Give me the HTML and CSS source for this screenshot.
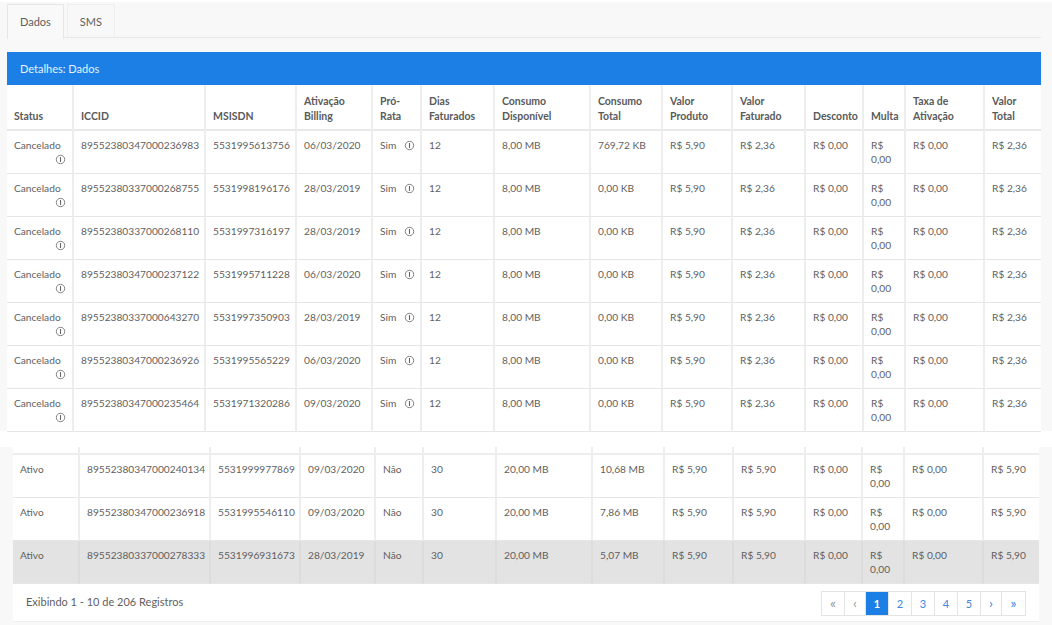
FILE: index.html
```html
<!DOCTYPE html>
<html lang="pt-BR">
<head>
    <meta charset="UTF-8">
    <title>Detalhes: Dados</title>
    <link rel="stylesheet" href="styles.css">
</head>
<body>
    <svg class="icon-defs" width="0" height="0">
        <symbol id="info" viewBox="0 0 11 11">
            <circle cx="5.5" cy="5.5" r="4.2" fill="none" stroke="currentColor" stroke-width="0.8"/>
            <path d="M5.5 3v5" fill="none" stroke="currentColor" stroke-width="1.1"/>
        </symbol>
    </svg>

    <!-- Primeira parte -->
    <div class="top-part">
        <div class="tabs">
            <div class="tab active">Dados</div>
            <div class="tab">SMS</div>
        </div>
        <div class="panel-title">Detalhes: Dados</div>
        <table class="top-table">
            <colgroup><col><col><col><col><col><col><col><col><col><col><col><col><col><col></colgroup>
            <thead>
                <tr><th>Status</th><th>ICCID</th><th>MSISDN</th><th>Ativação Billing</th><th>Pró-Rata</th><th>Dias Faturados</th><th>Consumo Disponível</th><th>Consumo Total</th><th>Valor Produto</th><th>Valor Faturado</th><th>Desconto</th><th>Multa</th><th>Taxa de Ativação</th><th>Valor Total</th></tr>
            </thead>
            <tbody>
                <tr><td>Cancelado<div class="status-info"><svg class="info-icon"><use href="#info"/></svg></div></td><td>89552380347000236983</td><td>5531995613756</td><td>06/03/2020</td><td class="rate-cell">Sim<svg class="info-icon rate-info"><use href="#info"/></svg></td><td>12</td><td>8,00 MB</td><td>769,72 KB</td><td>R$ 5,90</td><td>R$ 2,36</td><td>R$ 0,00</td><td>R$ 0,00</td><td>R$ 0,00</td><td>R$ 2,36</td></tr>
                <tr><td>Cancelado<div class="status-info"><svg class="info-icon"><use href="#info"/></svg></div></td><td>89552380337000268755</td><td>5531998196176</td><td>28/03/2019</td><td class="rate-cell">Sim<svg class="info-icon rate-info"><use href="#info"/></svg></td><td>12</td><td>8,00 MB</td><td>0,00 KB</td><td>R$ 5,90</td><td>R$ 2,36</td><td>R$ 0,00</td><td>R$ 0,00</td><td>R$ 0,00</td><td>R$ 2,36</td></tr>
                <tr><td>Cancelado<div class="status-info"><svg class="info-icon"><use href="#info"/></svg></div></td><td>89552380337000268110</td><td>5531997316197</td><td>28/03/2019</td><td class="rate-cell">Sim<svg class="info-icon rate-info"><use href="#info"/></svg></td><td>12</td><td>8,00 MB</td><td>0,00 KB</td><td>R$ 5,90</td><td>R$ 2,36</td><td>R$ 0,00</td><td>R$ 0,00</td><td>R$ 0,00</td><td>R$ 2,36</td></tr>
                <tr><td>Cancelado<div class="status-info"><svg class="info-icon"><use href="#info"/></svg></div></td><td>89552380347000237122</td><td>5531995711228</td><td>06/03/2020</td><td class="rate-cell">Sim<svg class="info-icon rate-info"><use href="#info"/></svg></td><td>12</td><td>8,00 MB</td><td>0,00 KB</td><td>R$ 5,90</td><td>R$ 2,36</td><td>R$ 0,00</td><td>R$ 0,00</td><td>R$ 0,00</td><td>R$ 2,36</td></tr>
                <tr><td>Cancelado<div class="status-info"><svg class="info-icon"><use href="#info"/></svg></div></td><td>89552380337000643270</td><td>5531997350903</td><td>28/03/2019</td><td class="rate-cell">Sim<svg class="info-icon rate-info"><use href="#info"/></svg></td><td>12</td><td>8,00 MB</td><td>0,00 KB</td><td>R$ 5,90</td><td>R$ 2,36</td><td>R$ 0,00</td><td>R$ 0,00</td><td>R$ 0,00</td><td>R$ 2,36</td></tr>
                <tr><td>Cancelado<div class="status-info"><svg class="info-icon"><use href="#info"/></svg></div></td><td>89552380347000236926</td><td>5531995565229</td><td>06/03/2020</td><td class="rate-cell">Sim<svg class="info-icon rate-info"><use href="#info"/></svg></td><td>12</td><td>8,00 MB</td><td>0,00 KB</td><td>R$ 5,90</td><td>R$ 2,36</td><td>R$ 0,00</td><td>R$ 0,00</td><td>R$ 0,00</td><td>R$ 2,36</td></tr>
                <tr><td>Cancelado<div class="status-info"><svg class="info-icon"><use href="#info"/></svg></div></td><td>89552380347000235464</td><td>5531971320286</td><td>09/03/2020</td><td class="rate-cell">Sim<svg class="info-icon rate-info"><use href="#info"/></svg></td><td>12</td><td>8,00 MB</td><td>0,00 KB</td><td>R$ 5,90</td><td>R$ 2,36</td><td>R$ 0,00</td><td>R$ 0,00</td><td>R$ 0,00</td><td>R$ 2,36</td></tr>
            </tbody>
        </table>
    </div>

    <!-- Segunda parte -->
    <div class="bottom-part">
        <table class="bottom-table">
            <colgroup><col><col><col><col><col><col><col><col><col><col><col><col><col><col></colgroup>
            <tbody>
                <tr class="cut-row"><td></td><td></td><td></td><td></td><td></td><td></td><td></td><td></td><td></td><td></td><td></td><td></td><td></td><td></td></tr>
                <tr><td>Ativo</td><td>89552380347000240134</td><td>5531999977869</td><td>09/03/2020</td><td>Não</td><td>30</td><td>20,00 MB</td><td>10,68 MB</td><td>R$ 5,90</td><td>R$ 5,90</td><td>R$ 0,00</td><td>R$ 0,00</td><td>R$ 0,00</td><td>R$ 5,90</td></tr>
                <tr><td>Ativo</td><td>89552380347000236918</td><td>5531995546110</td><td>09/03/2020</td><td>Não</td><td>30</td><td>20,00 MB</td><td>7,86 MB</td><td>R$ 5,90</td><td>R$ 5,90</td><td>R$ 0,00</td><td>R$ 0,00</td><td>R$ 0,00</td><td>R$ 5,90</td></tr>
                <tr class="selected"><td>Ativo</td><td>89552380337000278333</td><td>5531996931673</td><td>28/03/2019</td><td>Não</td><td>30</td><td>20,00 MB</td><td>5,07 MB</td><td>R$ 5,90</td><td>R$ 5,90</td><td>R$ 0,00</td><td>R$ 0,00</td><td>R$ 0,00</td><td>R$ 5,90</td></tr>
            </tbody>
        </table>
        <div class="table-footer">
            <span>Exibindo 1 - 10 de 206 Registros</span>
            <div class="pagination">
                <span class="page-link arrow muted">«</span>
                <span class="page-link arrow narrow muted">‹</span>
                <span class="page-link current">1</span>
                <span class="page-link">2</span>
                <span class="page-link">3</span>
                <span class="page-link">4</span>
                <span class="page-link">5</span>
                <span class="page-link arrow narrow">›</span>
                <span class="page-link arrow">»</span>
            </div>
        </div>
    </div>
</body>
</html>
```

FILE: styles.css
```css
/* Geral */
body {
    margin: 0;
    height: 625px;
    overflow: hidden;
    background: #fff;
    font-family: Lato, "Open Sans", Arial, sans-serif;
    font-size: 10.2px;
    color: #5f5f5f;
}

.icon-defs {
    position: absolute;
}

/* Partes da pagina */
.top-part {
    margin-top: 2px;
    height: 429px;
    padding: 2px 11px 0 7px;
    box-sizing: border-box;
    background: #f8f8f8;
}

.bottom-part {
    margin-top: 16px;
    height: 178px;
    padding: 0 13px;
    background: #f8f8f8;
}

/* Abas */
.tabs {
    display: flex;
    gap: 3px;
    height: 33px;
    border-bottom: 1px solid #e8e8e8;
}

.tab {
    padding: 0 12px;
    line-height: 33px;
    font-size: 11px;
    color: #5f5f5f;
    border: 1px solid #eee;
    border-bottom: none;
}

.tab.active {
    height: 34px;
    border-color: #e6e6e6;
    background: #f9f9f9;
}

/* Titulo azul */
.panel-title {
    margin-top: 14px;
    height: 33px;
    padding: 0 13px;
    line-height: 33px;
    font-size: 11px;
    color: #e8f2fd;
    background: #1b7fe6;
}

/* Tabela */
table {
    width: 100%;
    table-layout: fixed;
    border-spacing: 0;
    background: #fff;
}

.top-table col:nth-child(1), .bottom-table col:nth-child(1) { width: 67px; }
.top-table col:nth-child(2) { width: 132px; }
.top-table col:nth-child(3) { width: 91px; }
.top-table col:nth-child(4) { width: 76px; }
.top-table col:nth-child(5) { width: 49px; }
.top-table col:nth-child(6) { width: 73px; }
.top-table col:nth-child(7) { width: 96px; }
.top-table col:nth-child(8) { width: 72px; }
.top-table col:nth-child(9) { width: 70px; }
.top-table col:nth-child(10) { width: 73px; }
.top-table col:nth-child(11) { width: 58px; }
.top-table col:nth-child(12) { width: 42px; }
.top-table col:nth-child(13) { width: 79px; }
.top-table col:nth-child(14) { width: 56px; }

.bottom-table col:nth-child(2) { width: 131px; }
.bottom-table col:nth-child(3) { width: 90px; }
.bottom-table col:nth-child(4) { width: 75px; }
.bottom-table col:nth-child(5) { width: 48px; }
.bottom-table col:nth-child(6) { width: 73px; }
.bottom-table col:nth-child(7) { width: 96px; }
.bottom-table col:nth-child(8) { width: 72px; }
.bottom-table col:nth-child(9) { width: 69px; }
.bottom-table col:nth-child(10) { width: 72px; }
.bottom-table col:nth-child(11) { width: 57px; }
.bottom-table col:nth-child(12) { width: 42px; }
.bottom-table col:nth-child(13) { width: 79px; }
.bottom-table col:nth-child(14) { width: 55px; }

th, td {
    padding: 7px;
    line-height: 14px;
    text-align: left;
    vertical-align: top;
    border-right: 2px solid #eee;
    border-bottom: 1px solid #e6e6e6;
    box-sizing: border-box;
}

th:last-child, td:last-child {
    border-right: none;
}

th {
    height: 46px;
    padding: 9px 7px 5px;
    line-height: 15px;
    vertical-align: bottom;
    font-size: 10.5px;
    font-weight: 700;
    color: #5a5a5a;
    border-bottom: 2px solid #e8e8e8;
}

tbody tr {
    height: 43px;
}

tr.selected td {
    background: #e3e3e3;
    border-right-color: #dcdcdc;
}

tr.cut-row {
    height: 8px;
}

tr.cut-row td {
    height: 8px;
    padding: 0;
    border-bottom: 2px solid #eee;
}

.rate-cell {
    white-space: nowrap;
}

.info-icon {
    width: 11px;
    height: 11px;
    color: #666;
    vertical-align: -2px;
}

.status-info {
    height: 14px;
    margin-right: -1px;
    text-align: right;
}

.rate-info {
    margin-left: 8px;
}

/* Rodape e paginacao */
.table-footer {
    display: flex;
    justify-content: space-between;
    height: 38px;
    padding: 7px 13px 0;
    box-sizing: border-box;
    line-height: 22px;
    font-size: 11px;
    background: #fff;
    border-bottom: 1px solid #eee;
}

.pagination {
    display: flex;
    height: 25px;
    border: 1px solid #e4e4e4;
    box-sizing: border-box;
}

.page-link {
    width: 23px;
    line-height: 23px;
    text-align: center;
    font-size: 11px;
    color: #3f87e0;
    border-right: 1px solid #e4e4e4;
    box-sizing: border-box;
}

.page-link:last-child {
    border-right: none;
}

.page-link.narrow {
    width: 21px;
}

.page-link.arrow {
    font-size: 14px;
    line-height: 21px;
}

.page-link.muted {
    color: #999;
}

.page-link.current {
    font-weight: 700;
    color: #fff;
    background: #1b7fe6;
}
```
